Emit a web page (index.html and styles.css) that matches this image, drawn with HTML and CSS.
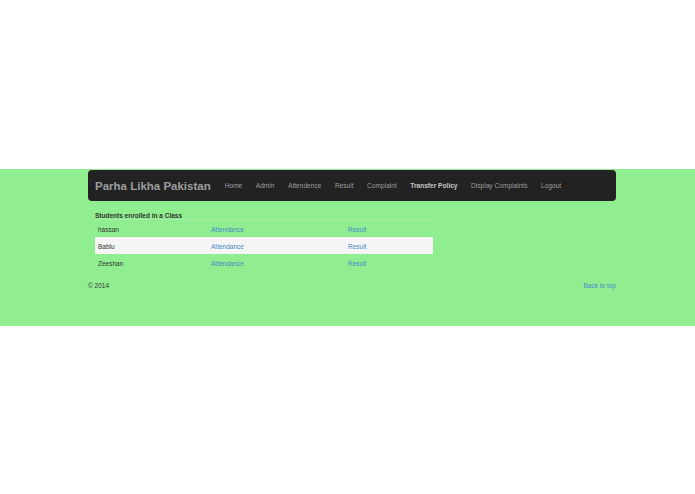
FILE: index.html
```html
<!DOCTYPE html>
<html>
<head>
<meta charset="utf-8">
<title>Parha Likha Pakistan</title>
<link rel="stylesheet" href="styles.css">
</head>
<body>
<div class="top-space"></div>
<div class="band">
  <div class="container">
    <div class="navbar">
      <a class="brand" href="#">Parha Likha Pakistan</a>
      <ul class="nav">
        <li><a href="#">Home</a></li>
        <li><a href="#">Admin</a></li>
        <li><a href="#">Attendence</a></li>
        <li><a href="#">Result</a></li>
        <li><a href="#">Complaint</a></li>
        <li><a class="active" href="#">Transfer Policy</a></li>
        <li><a href="#">Display Complaints</a></li>
        <li><a href="#">Logout</a></li>
      </ul>
    </div>
    <div class="content">
      <table class="students">
        <thead>
          <tr><th colspan="3">Students enrolled in a Class</th></tr>
        </thead>
        <tbody>
          <tr><td class="c1">hassan</td><td class="c2"><a href="#">Attendance</a></td><td class="c3"><a href="#">Result</a></td></tr>
          <tr class="alt"><td class="c1">Bablu</td><td class="c2"><a href="#">Attendance</a></td><td class="c3"><a href="#">Result</a></td></tr>
          <tr><td class="c1">Zeeshan</td><td class="c2"><a href="#">Attendance</a></td><td class="c3"><a href="#">Result</a></td></tr>
        </tbody>
      </table>
    </div>
    <div class="footer">
      <span>&copy; 2014</span>
      <a href="#">Back to top</a>
    </div>
  </div>
</div>
</body>
</html>
```
FILE: styles.css
```css
html, body {
  margin: 0;
  padding: 0;
  background: #ffffff;
  font-family: "Liberation Sans", Arial, sans-serif;
  font-size: 6.5px;
  color: #333333;
}
.top-space {
  height: 169px;
}
.band {
  background: #90ee90;
  height: 157px;
}
.container {
  width: 528px;
  margin: 0 0 0 88px;
  padding-top: 1px;
}
.navbar {
  background: #222222;
  border-radius: 4px;
  height: 31px;
  display: flex;
  align-items: center;
  padding-left: 7px;
}
.brand {
  color: #9d9d9d;
  font-weight: bold;
  font-size: 11.5px;
  text-decoration: none;
  margin-right: 7.25px;
}
.nav {
  list-style: none;
  display: flex;
  margin: 0;
  padding: 0;
}
.nav a {
  display: block;
  color: #9d9d9d;
  font-size: 6.6px;
  text-decoration: none;
  padding: 0 6.75px;
}
.nav a.active {
  color: #c8c8c8;
  font-weight: bold;
}
.content {
  padding: 10px 0 0 7px;
}
.students {
  width: 338px;
  border-collapse: collapse;
}
.students th {
  text-align: left;
  font-weight: bold;
  padding: 0;
  border-bottom: 1px solid #a9e9a9;
  height: 8px;
  vertical-align: middle;
}
.students td {
  padding: 1px 3px 0;
  height: 16px;
  vertical-align: middle;
}
.students .c1 { width: 107px; }
.students .c2 { width: 131px; }
.students tr.alt td {
  background: #f5f5f5;
}
.students a, .footer a {
  color: #428bca;
  text-decoration: none;
}
.footer {
  display: flex;
  justify-content: space-between;
  margin-top: 11px;
}
```
